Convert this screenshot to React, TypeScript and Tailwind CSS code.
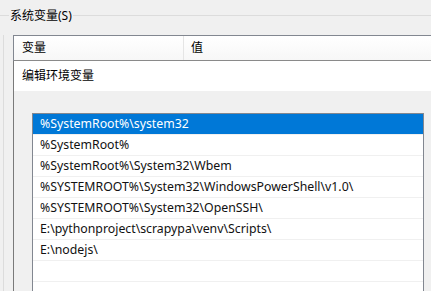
import type { JSX } from "react";

const paths = [
  "%SystemRoot%\\system32",
  "%SystemRoot%",
  "%SystemRoot%\\System32\\Wbem",
  "%SYSTEMROOT%\\System32\\WindowsPowerShell\\v1.0\\",
  "%SYSTEMROOT%\\System32\\OpenSSH\\",
  "E:\\pythonproject\\scrapypa\\venv\\Scripts\\",
  "E:\\nodejs\\",
  "",
  "",
];

export default function App(): JSX.Element {
  return (
    <div
      className="w-[431px] h-[291px] overflow-hidden bg-[#f0f0f0] text-[12px] text-black"
      style={{ fontFamily: '"Noto Sans", "Noto Sans CJK SC", sans-serif' }}
    >
      {/* Group box title */}
      <div className="flex items-center h-[35px] pb-[4px]">
        <div className="w-[9px] border-t border-[#dcdcdc]" />
        <span className="px-[1px] leading-[14px]">系统变量(S)</span>
        <div className="flex-1 border-t border-[#dcdcdc]" />
      </div>

      <div className="ml-[3px] border-l border-[#dcdcdc] pl-[9px]">
        {/* Variables table header */}
        <div className="border-l border-t border-[#828790] bg-white">
          <div className="flex h-[25px] border-b border-[#8a8a8a] bg-gradient-to-b from-white to-[#f7f7f7]">
            <div className="w-[170px] pl-[8px] flex items-center border-r border-[#e5e5e5]">变量</div>
            <div className="pl-[7px] flex items-center">值</div>
          </div>
        </div>

        {/* Edit dialog */}
        <div className="border-l border-[#7a7a7a]">
          <div className="h-[30px] bg-white flex items-center pl-[8px]">编辑环境变量</div>
          <div className="pt-[22px] pl-[18px] h-[200px]">
            <div className="w-[392px] border border-[#828790] bg-white text-[12.3px] text-[#111]">
              {paths.map((p, i) => (
                <div
                  key={i}
                  className={
                    i === 0
                      ? "h-[21px] border-b border-[#f0f0f0] bg-[#0078d7] text-white pl-[7px] flex items-center"
                      : "h-[21px] border-b border-[#f0f0f0] pl-[7px] flex items-center"
                  }
                >
                  {p}
                </div>
              ))}
            </div>
          </div>
        </div>
      </div>
    </div>
  );
}
